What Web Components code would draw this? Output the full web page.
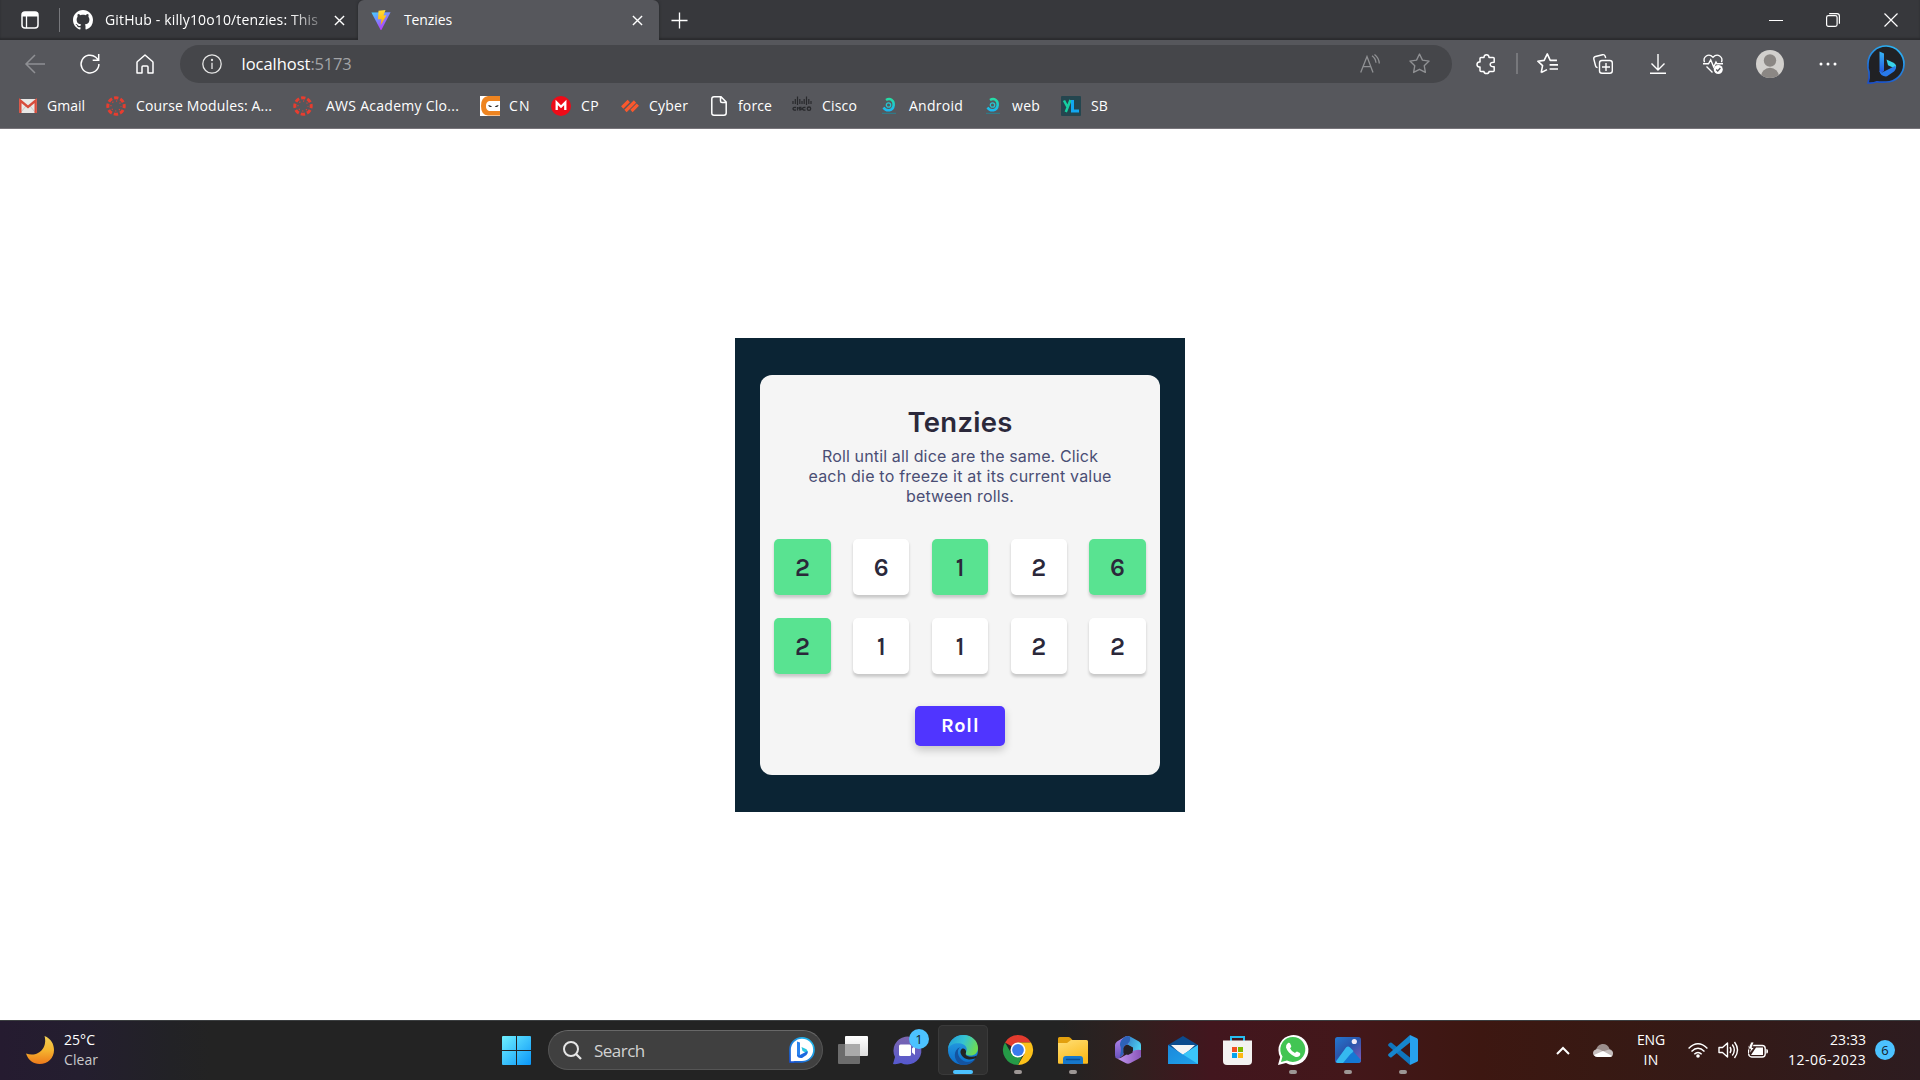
<!DOCTYPE html>
<html lang="en">
<head>
<meta charset="utf-8">
<title>Tenzies</title>
<style>
html,body{margin:0;height:100%;overflow:hidden;background:#fff}
body{font-family:"Open Sans","Noto Sans",sans-serif;font-size:14px}
</style>
</head>
<body>
<desktop-screen></desktop-screen>

<template id="icons">
<svg data-n="tabs" viewBox="0 0 18 18"><rect x="1" y="1" width="16" height="16" rx="3" fill="none" stroke="#fff" stroke-width="1.5"/><path d="M1 4a3 3 0 0 1 3-3h10a3 3 0 0 1 3 3v1.500H1z" fill="#fff"/><path d="M5.500 5v12" stroke="#fff" stroke-width="1.300"/></svg>
<svg data-n="github" viewBox="0 0 16 16"><path fill="#fff" d="M8 0C3.58 0 0 3.58 0 8c0 3.54 2.290 6.530 5.470 7.590.4.070.55-.17.55-.38 0-.19-.010-.82-.010-1.490-2.010.37-2.530-.49-2.690-.94-.090-.23-.48-.94-.82-1.130-.28-.15-.68-.52-.010-.53.63-.010 1.080.58 1.230.82.72 1.210 1.870.87 2.330.66.070-.52.28-.87.51-1.070-1.780-.2-3.640-.89-3.640-3.950 0-.87.31-1.590.82-2.150-.080-.2-.36-1.020.080-2.120 0 0 .67-.21 2.200.82.64-.18 1.320-.27 2-.27s1.360.090 2 .27c1.530-1.040 2.200-.82 2.200-.82.44 1.100.16 1.920.080 2.120.51.56.82 1.270.82 2.150 0 3.070-1.870 3.750-3.650 3.950.29.25.54.73.54 1.480 0 1.070-.010 1.930-.010 2.200 0 .21.15.46.55.38A8.010 8.010 0 0 0 16 8c0-4.420-3.580-8-8-8z"/></svg>
<svg data-n="vite" viewBox="0 0 20 20"><defs><linearGradient id="v1" x1="0" y1="0" x2=".6" y2="1"><stop stop-color="#41d1ff"/><stop offset="1" stop-color="#bd34fe"/></linearGradient><linearGradient id="v2" x1="0" y1="0" x2="0" y2="1"><stop stop-color="#ffdd35"/><stop offset="1" stop-color="#ffa800"/></linearGradient></defs><path d="M.4 2.600 19.600 2.300 10.500 19.700q-.5.500-1 0z" fill="url(#v1)"/><path d="M7.500.8 14.500 0 12.500 5.500l3-.3-5.800 10 .8-6H7z" fill="url(#v2)"/></svg>
<svg data-n="x" viewBox="0 0 12 12"><path d="m1 1 10 10M11 1 1 11" stroke="#fff" stroke-width="1.500"/></svg>
<svg data-n="plus" viewBox="0 0 18 18"><path d="M9 .5v17M.5 9h17" stroke="#fff" stroke-width="1.400"/></svg>
<svg data-n="min" viewBox="0 0 14 14"><path d="M0 7.500h14" stroke="#fff"/></svg>
<svg data-n="restore" viewBox="0 0 14 14" fill="none" stroke="#fff" stroke-width="1.200"><rect x=".6" y="2.600" width="10.500" height="10.800" rx="1.800"/><path d="M3.200.6H11Q13.400.8 13.400 3v7.800"/></svg>
<svg data-n="wclose" viewBox="0 0 14 14"><path d="m.5.5 13 13M13.500.5l-13 13" stroke="#fff" stroke-width="1.200"/></svg>
<svg data-n="back" viewBox="0 0 20 20" fill="none" stroke="#8f9094" stroke-width="1.500"><path d="M20 10H1M10 1 1 10l9 9"/></svg>
<svg data-n="reload" viewBox="0 0 20 20" fill="none" stroke="#fff" stroke-width="1.500"><path d="M18.900 10A8.900 8.900 0 1 1 15.800 3.300L18.500 6M18.700 0v6.300h-6"/></svg>
<svg data-n="home" viewBox="0 0 18 20" fill="none" stroke="#fff" stroke-width="1.500" stroke-linejoin="round"><path d="M1 8.500Q1 8 1.500 7.500L9 1l7.500 6.500Q17 8 17 8.500V19h-5v-6q0-1-1-1H7q-1 0-1 1v6H1z"/></svg>
<svg data-n="info" viewBox="0 0 20 20" fill="none" stroke="#e6e6e6" stroke-width="1.300"><circle cx="10" cy="10" r="9.200"/><path d="M10 8.700v6.300"/><circle cx="10" cy="6" r=".5" fill="#fff"/></svg>
<svg data-n="aloud" viewBox="0 0 20 20" fill="none" stroke="#909194" stroke-width="1.300"><path d="M.7 18.500 7 2.500l6 16M3 12.700h8M12 1.800q3.500 2.300 4 7M14.500.5q4.500 3.500 4.800 9"/></svg>
<svg data-n="star" viewBox="0 0 20 20" fill="none" stroke="#909194" stroke-width="1.300" stroke-linejoin="round"><path d="m10 1 2.800 5.800 6.300.9-4.600 4.400 1.100 6.400-5.600-3-5.600 3 1.100-6.400L.9 7.700l6.300-.9z"/></svg>
<svg data-n="puzzle" viewBox="0 0 20 20" fill="none" stroke="#fff" stroke-width="1.500" stroke-linejoin="round"><path d="M5 3.500h3V3q.2-2.300 2.500-2.300T13 3v.5h4.200q1 0 1 1v3.800c-2 0-4 .2-4 2.200s2 2.400 4 2.200v3.800q0 1-1 1H13v.4q-.2 1.700-2.500 1.700T8 17.900v-.4H5q-1 0-1-1V13h-.7Q1 12.700 1 10.500T3.300 8H4V4.500q0-1 1-1z"/></svg>
<svg data-n="favs" viewBox="0 0 20 20" fill="none" stroke="#fff" stroke-width="1.500" stroke-linejoin="round"><path d="M4 18.700 5.300 12 .8 7.800l6-.8L9.800.9 12.600 7h6.400M9.500 15.800 4 18.700M12 11.300h8M12 15.300h8"/></svg>
<svg data-n="collect" viewBox="0 0 20 20" fill="none" stroke="#fff" stroke-width="1.400"><rect x="6.500" y="6.500" width="12.800" height="12.800" rx="2.500"/><path d="M13 9v8M9 13h8M4.600 13.600Q3 13.500 2.600 12L.8 5Q.5 3 2.500 2.500l7-1.800q2-.4 2.700 1.600l.5 1.700"/></svg>
<svg data-n="down" viewBox="0 0 16 20" fill="none" stroke="#fff" stroke-width="1.400"><path d="M8 0v15.500M1.500 9.500 8 16l6.500-6.500M0 19.300h16"/></svg>
<svg data-n="heart" viewBox="0 0 20 20" fill="none" stroke="#fff" stroke-width="1.400"><path d="M1.500 8.300C-.5 3 5.500-1.500 10 3.300c4.500-4.800 10.500-.3 8.500 5M0 9.800h5.500l2.200-4 3 7.300 2.300-5 1 1.700H20M3.500 12.500l6 6"/><circle cx="15.300" cy="15.500" r="4.500" fill="#fff" stroke="none"/><path d="m13.200 15.500 1.500 1.500 2.700-3" stroke="#56575c"/></svg>
<svg data-n="avatar" viewBox="0 0 28 28"><defs><clipPath id="av"><circle cx="14" cy="14" r="14"/></clipPath></defs><g clip-path="url(#av)"><path fill="#d2d0cd" d="M0 0h28v28H0z"/><circle cx="14" cy="10.500" r="6.200" fill="#8b8784"/><circle cx="14" cy="27" r="9.200" fill="#8b8784"/></g></svg>
<svg data-n="dots" viewBox="0 0 18 18" fill="#fff"><circle cx="2" cy="9" r="1.500"/><circle cx="9" cy="9" r="1.500"/><circle cx="16" cy="9" r="1.500"/></svg>
<svg data-n="bing" viewBox="0 0 38 40"><defs><linearGradient id="b1" x1=".7" y1="0" x2=".3" y2="1"><stop stop-color="#2cb5f5"/><stop offset="1" stop-color="#1b50c8"/></linearGradient><linearGradient id="b2" x1="0" y1="0" x2="0" y2="1"><stop stop-color="#36b5f4"/><stop offset="1" stop-color="#2358e0"/></linearGradient></defs><path d="M1 39Q2.800 34 2 28A18.200 18.200 0 0 1 1 19.200 18 18 0 1 1 19 38Q14 38.500 10 37.800 6 39.500 1 39z" fill="#202124" stroke="url(#b1)" stroke-width="1.700"/><path d="m12.500 7.500 4.500 2v17.500l-3 2-1.500-1.500z" fill="url(#b2)"/><path d="m19.500 15.500 7 3.200q4 2.500 2 6l-7.500-3.500z" fill="#38d2e8"/><path d="m12.500 27 2.500 1.500 13.500-6.700q1 3.500-1.500 5.700l-7 4.800q-3 .5-5.500-1.300-2-2-2-4z" fill="#287aec"/></svg>
<svg data-n="gmail" viewBox="0 0 18 14"><rect width="18" height="14" rx="1" fill="#e8e8e6"/><path d="m2 13 5-6M16 13l-5-6" stroke="#c8c8c8"/><path d="M1.300 14V1.500L9 8l7.700-6.500V14" fill="none" stroke="#d74c3c" stroke-width="2.400"/></svg>
<svg data-n="canvas" viewBox="0 0 20 20"><g fill="none" stroke="#e73d2f"><circle cx="10" cy="10" r="8.200" stroke-width="3" stroke-dasharray="4.400 2.040" stroke-dashoffset="2.200"/><circle cx="10" cy="10" r="5" stroke-width="1.200" stroke-dasharray="1.200 2.727" stroke-dashoffset=".6"/></g></svg>
<svg data-n="cn" viewBox="0 0 20 20"><path fill="#fff" d="M0 0h20v20H0z"/><path d="M20 0H8Q1 1 1 10t7 9.500h12V15H9q-3-1-3-5t3-5h11z" fill="#ee8420"/><rect x="6.500" y="7" width="13.500" height="6.500" rx="2" fill="#fff"/><path d="M8 9.500q2-1 4 1.200-2 1-4-1.200zM18.800 9.500q-2-1-4 1.200 2 1 4-1.200z" fill="#222"/></svg>
<svg data-n="mega" viewBox="0 0 20 20"><circle cx="10" cy="10" r="10" fill="#ee0b18"/><path d="M5.700 14V6.500L10 10.700l4.300-4.200V14" fill="none" stroke="#fff" stroke-width="2.300"/></svg>
<svg data-n="cyber" viewBox="0 0 18 14"><g stroke="#fa582d" stroke-width="3.200"><path d="M1.200 8.500 7.800 2M4.500 12 14 2.500M10.500 12l6.300-6.300"/></g></svg>
<svg data-n="doc" viewBox="0 0 16 20" fill="none" stroke="#fff" stroke-width="1.500"><path d="M3 .8h7L15.200 6v11q0 2.200-2.200 2.200H3Q.8 19.200.8 17V3Q.8.8 3 .8zM9.500 1v4q0 1.500 1.500 1.500h4"/></svg>
<svg data-n="cisco" viewBox="0 0 20 20"><path d="M1 5v3M3.300 3v5M5.500 .5V9M7.800 3v5M10 5v3M12.200 3v5M14.500 .5V9M16.800 3v5M19 5v3" stroke="#28292c" stroke-width="1.200"/><g fill="none" stroke="#28292c" stroke-width="1.300"><path d="M4 11.500q-3-.5-3 1.200t3 1.300M5.500 11v3.500M9.500 11.500q-2.500-.5-2.500.5t2.300 1q0 1.300-2.300.8M13.500 11.500q-3-.5-3 1.200t3 1.300"/><circle cx="17" cy="12.700" r="1.700"/></g></svg>
<svg data-n="swirl" viewBox="0 0 14 16"><defs><linearGradient id="sw" x1="0" y1="0" x2="0" y2="1"><stop stop-color="#25dda5"/><stop offset="1" stop-color="#19b8f2"/></linearGradient></defs><path d="M4 2C8-.5 12 2 11.700 7 11 13 4.500 14 1.500 9.500" fill="none" stroke="url(#sw)" stroke-width="2.500"/><circle cx="6.500" cy="7" r="2.200" fill="none" stroke="#25c5d0" stroke-width="1.300"/><path d="M0 15.300h14" stroke="#2a8190"/></svg>
<svg data-n="yl" viewBox="0 0 20 20"><rect width="20" height="20" rx="1" fill="#24464f"/><path d="m3 4.500 3.200 6M9.500 4 4.800 16" stroke="#16cfa0" stroke-width="2.500"/><path d="M11.500 4v11H18" fill="none" stroke="#12a8f2" stroke-width="3"/></svg>
<svg data-n="moon" viewBox="0 0 28 28"><defs><linearGradient id="mo" x1="0" y1="0" x2="0" y2="1"><stop stop-color="#f1cf57"/><stop offset=".5" stop-color="#f5b52f"/><stop offset="1" stop-color="#ee7a1b"/></linearGradient></defs><path d="M18.500 0C25 2.500 28 8 28 14c0 8-6 14-14.500 14C7.500 28 2 24 0 17.500 12 22 22 12 18.500 0z" fill="url(#mo)"/></svg>
<svg data-n="start" viewBox="0 0 29 29"><defs><linearGradient id="wi" x1="0" y1="0" x2="1" y2="1"><stop stop-color="#6ff0ff"/><stop offset="1" stop-color="#0a96f8"/></linearGradient></defs><path d="M1 0h13v14H0V1Q0 0 1 0zM15 0h13q1 0 1 1v13H15zM0 15h14v14H1q-1 0-1-1zM15 15h14v13q0 1-1 1H15z" fill="url(#wi)"/></svg>
<svg data-n="search" viewBox="0 0 19 19"><circle cx="8" cy="8" r="7" fill="none" stroke="#e6e6e6" stroke-width="2"/><path d="m13 13 5 5" stroke="#e6e6e6" stroke-width="2.300"/></svg>
<svg data-n="bing2" viewBox="0 0 26 26"><defs><linearGradient id="b3" x1="1" y1="0" x2="0" y2="1"><stop stop-color="#1fc6f0"/><stop offset="1" stop-color="#184fd0"/></linearGradient></defs><path d="M1 25V13A12 12 0 1 1 13 24.800H6Q3 25.200 1 25z" fill="#fff" stroke="url(#b3)" stroke-width="1.700"/><path d="m8 4.500 3 1v13l-2 1-1-1z" fill="#2a83ee"/><path d="m12.500 10 5 2.300q2 2 1 4.200l-5-2.500z" fill="#2ac5de"/><path d="m8 17.500 2 1 8.500-4.500q.8 2.500-1 4l-4.500 3q-5 .5-5-3.500z" fill="#1b68df"/></svg>
<svg data-n="taskview" viewBox="0 0 30 28"><defs><linearGradient id="tv" x1="0" y1="0" x2="0" y2="1"><stop stop-color="#fff"/><stop offset="1" stop-color="#ddd"/></linearGradient></defs><rect y="8" width="22" height="20" rx="1" fill="#6c6c6c"/><rect x="7" width="23" height="20" rx="1" fill="url(#tv)"/><path d="M7 8h15v12H7z" fill="#aaa"/></svg>
<svg data-n="chat" viewBox="0 0 29 29"><defs><linearGradient id="ch" x1="0" y1="0" x2="0" y2="1"><stop stop-color="#7b65ae"/><stop offset="1" stop-color="#5559d0"/></linearGradient></defs><path d="M0 28 2 21A14 14 0 1 1 8 27Q4 28.500 0 28z" fill="url(#ch)"/><rect x="6" y="8.500" width="12" height="11.500" rx="1.500" fill="#fff"/><path d="m19 12.500 3-2.500v9l-3-2.500z" fill="#fff"/></svg>
<svg data-n="edge" viewBox="0 0 30 30"><defs><linearGradient id="e1" x1="0" y1=".2" x2="1" y2=".5"><stop stop-color="#229fd8"/><stop offset=".5" stop-color="#35c3d2"/><stop offset="1" stop-color="#6edc50"/></linearGradient><linearGradient id="e2" x1="0" y1="0" x2="0" y2="1"><stop stop-color="#2aa5e3"/><stop offset="1" stop-color="#0b6ccc"/></linearGradient></defs><circle cx="15" cy="15" r="15" fill="url(#e2)"/><path d="M0 14C1 5 8 0 15.500 0 24 0 30 6 30 13c0 5-3.500 7.500-7.500 7.500-4 0-5.500-1.700-4.500-3.300 1.800-3 .5-7.200-5-8.700C8 7.300 2 9 0 14z" fill="url(#e1)"/><path d="M12.500 12C9 14 9 20 13 24c4 4 9 4 14.500 0C24 29 19 30.500 14 30 8 28 5 21 8 15.500q1.700-3 4.500-3.500z" fill="#1453a0"/><path d="M13 15c-2 2.500 1.500 9 8 9.500 3 .2 5-1 6-1 .8.300 1.500-1 2-3-3 1.500-6 1.500-9 .7-4-1.500-1.500-3-2-5-.7-3-3.700-3.500-5-1.200z" fill="#232323"/></svg>
<svg data-n="chrome" viewBox="0 0 30 30"><path d="M15 15 2 7.500A15 15 0 0 1 28 7.500H15z" fill="#e33b2e"/><path d="M15 15V7.500h13A15 15 0 0 1 15 30l6.500-11.300z" fill="#fcc11a"/><path d="M15 30A15 15 0 0 1 2 7.500l6.500 11.200L15 22.500l4-1.200z" fill="#259a47"/><circle cx="15" cy="15" r="7.500" fill="#fff"/><circle cx="15" cy="15" r="5.900" fill="#3a7bec"/></svg>
<svg data-n="folder" viewBox="0 0 30 27"><defs><linearGradient id="fo" x1="0" y1="0" x2=".5" y2="1"><stop stop-color="#ffdf76"/><stop offset="1" stop-color="#fbbb1e"/></linearGradient></defs><path d="M0 1.500Q0 0 1.500 0h9q1 0 1.800.8L14.500 3H28v8H0z" fill="#e2a00e"/><path d="M0 6h9l4-3h15.500Q30 3 30 4.500V26q0 .8-1 .8H1q-1 0-1-1z" fill="url(#fo)"/><path d="M5 27v-5q0-3 3-3h14q3 0 3 3v5z" fill="#1778cb"/><path d="M8.500 22.500h13" stroke="#0a4e94" stroke-width="1.400" stroke-linecap="round"/></svg>
<svg data-n="m365" viewBox="0 0 26 28"><defs><linearGradient id="m1" x1="0" y1="0" x2="1" y2=".6"><stop stop-color="#2f6fc0"/><stop offset="1" stop-color="#50d8f5"/></linearGradient><linearGradient id="m2" x1="0" y1="0" x2="0" y2="1"><stop stop-color="#b78aef"/><stop offset="1" stop-color="#6a52bd"/></linearGradient><linearGradient id="m3" x1="0" y1="0" x2="1" y2="0"><stop stop-color="#c39af2"/><stop offset="1" stop-color="#8a55b8"/></linearGradient></defs><path d="M13 0q1.500 0 3 1l8 4.500q2 1.300 2 3.500v11q0 1-1 1.500L18 17v-5.500L9 7z" fill="url(#m1)"/><path d="M13 0Q11 0 9.500 1L2 5.500Q0 7 0 9v10.500Q0 22 2 22.500 4 23 6 21l2.500-2v-6.500q0-2 1.500-3L14 7V1z" fill="url(#m2)"/><path d="M9.500 1Q13-1 15 1.500 16 7 10 9.500q-1.500 1-1.500 3V18l-4 3.500Q7 14 5 9 5 4 9.500 1z" fill="#2d62b8"/><path d="M2 22.500q3 .5 6-2l9-5q4-2.500 9-1.500v5.500q0 2-2 3L15.500 27q-2.500 1.500-5 0z" fill="url(#m3)"/><path d="m13 9 4.500 2.700v5L13 19l-4.500-2.300v-5z" fill="#252025"/></svg>
<svg data-n="mail" viewBox="0 0 30 28"><defs><linearGradient id="ma" x1="0" y1="0" x2="1" y2="1"><stop stop-color="#1a88db"/><stop offset="1" stop-color="#20a2ea"/></linearGradient></defs><path d="M0 9 15 0l15 9v6H0z" fill="#0b4b8d"/><path d="M3 9h24L15 20z" fill="#f4f4f4"/><path d="m0 9 15 9.500L30 9v19H0z" fill="url(#ma)"/><path d="M30 9 15 18.500 30 28z" fill="#3bc5f8"/></svg>
<svg data-n="store" viewBox="0 0 29 29"><path d="M8 6V1h13v5" fill="none" stroke="#26bdf0" stroke-width="2"/><path d="M0 4.500h29V25q0 4-4 4H4q-4 0-4-4z" fill="#f3f2f1"/><path fill="#f05023" d="M9 11h5v5H9z"/><path fill="#7fb900" d="M15 11h5v5h-5z"/><path fill="#03a3ee" d="M9 17h5v5H9z"/><path fill="#fdb812" d="M15 17h5v5h-5z"/></svg>
<svg data-n="wa" viewBox="0 0 30 30"><path d="M0 30 2.200 22A15 15 0 1 1 8 28z" fill="#fff"/><path d="m3 27 1.500-5.500A12.500 12.500 0 1 1 9 25.500z" fill="#42c553"/><path d="M10 8q1-.8 2 .2l1.300 3q0 1-1.300 2 1.500 3.300 5 4.800 1-1.500 2-1.500l3 1.500q.8 1-.3 2.700-2 1.800-4.700 1C12 19.500 9 15.500 8 12.500q-.4-3 2-4.500z" fill="#fff"/></svg>
<svg data-n="photos" viewBox="0 0 26 26"><defs><linearGradient id="ph" x1="0" y1="0" x2=".8" y2="1"><stop stop-color="#2478d0"/><stop offset=".5" stop-color="#2a55ac"/><stop offset="1" stop-color="#7a5ab8"/></linearGradient></defs><rect width="26" height="26" rx="2.500" fill="url(#ph)"/><path d="M1 24 11 11q2-2.300 4 0l11 12q-.5 3-3 3H3q-2 0-2-2z" fill="#1478d4"/><path d="M1 24.500 11 10.500q2-2 4 0l3.500 3.500q-1 2-3 3L8 26H3q-1.500 0-2-1.500z" fill="#35b9f0"/><circle cx="19.300" cy="4.500" r="2.600" fill="#f3eaf5"/></svg>
<svg data-n="vscode" viewBox="0 0 30 30"><path d="M.5 9 2 7.800q.8-.6 1.600 0L22 22.500V30L.5 11q-1-1 0-2z" fill="#0f75bd"/><path d="M22 7.500 3.600 22.200q-.8.600-1.600 0L.5 21q-1-1 0-2L22 0z" fill="#1686ce"/><path d="m22 0 7 3.300q1 .5 1 1.500v20.500q0 1-1 1.500L22 30z" fill="#27a1ee"/></svg>
<svg data-n="chev" viewBox="0 0 14 9"><path d="m1 8 6-6 6 6" fill="none" stroke="#fff" stroke-width="2"/></svg>
<svg data-n="cloud" viewBox="0 0 20 13"><path d="M3 6C4 2 7 0 10 0c3 0 5.500 1.500 6.500 5Q20 6 20 9.500L15 13 3 8z" fill="#9b8e8c"/><path d="M4 5q3-.5 6 2.500l6-2q4 1 4 4 0 3.500-3.500 3.500h-12Q0 12.500 0 9q0-3 4-4z" fill="#c5bebd"/><path d="m1 11 9-4 9 5q-1 1-2.500 1h-12Q2 13 1 11z" fill="#fff"/></svg>
<svg data-n="wifi" viewBox="0 0 20 15" fill="none" stroke="#fff" stroke-width="1.400"><path d="M.6 5.500q9.400-9.300 18.800 0M3.500 8.500q6.500-6.400 13 0M6.300 11.200q3.700-3.600 7.400 0"/><circle cx="10" cy="13" r="1.800" fill="#fff" stroke="none"/></svg>
<svg data-n="sound" viewBox="0 0 20 18" fill="none" stroke="#fff" stroke-width="1.400" stroke-linejoin="round"><path d="M1 6.500h3.500l5-4.500v14l-5-4.500H1zM12 6q2 3 0 6M14.300 3.500q4 5.500 0 11M16.500 1q6 8 0 16"/></svg>
<svg data-n="battery" viewBox="0 0 20 17"><rect x=".7" y="3.500" width="16.500" height="11.500" rx="3" fill="none" stroke="#fff" stroke-width="1.400"/><path d="M18.300 7v4.500q1.700 0 1.700-1.500V8.500Q20 7 18.300 7z" fill="#fff"/><path d="M8 5.500h7V13H3z" fill="#fff"/><path d="M3 0 0 7h2.500L1 12l5.500-6.500H4L6 0z" fill="#fff" stroke="#351a18" stroke-width=".8"/></svg>
</template>

<script>
class UiIcon extends HTMLElement{
  connectedCallback(){
    if(this.shadowRoot)return;
    const r=this.attachShadow({mode:'open'});
    r.innerHTML='<style>:host{display:block;flex:none}svg{display:block;width:100%;height:100%;overflow:visible}</style>';
    r.append(document.getElementById('icons').content.querySelector(`[data-n="${this.getAttribute('name')}"]`).cloneNode(true));
    this.style.width=this.getAttribute('w')+'px';
    this.style.height=(this.getAttribute('h')||this.getAttribute('w'))+'px';
    if(this.hasAttribute('ml'))this.style.marginLeft=this.getAttribute('ml')+'px';
  }
}
/* A label that tracks its letters so the text takes up the given width. */
class FitText extends HTMLElement{
  connectedCallback(){
    if(this.shadowRoot)return;
    const r=this.attachShadow({mode:'open'});
    r.innerHTML='<style>:host{display:block;flex:none;white-space:nowrap}span{display:inline-block}</style><span><slot></slot></span>';
    const w=+this.getAttribute('w'),s=r.querySelector('span'),n=this.textContent.length;
    if(this.hasAttribute('ml'))this.style.marginLeft=this.getAttribute('ml')+'px';
    this.style.width=w+'px';
    s.style.letterSpacing=(w-s.getBoundingClientRect().width)/Math.max(1,n-.5)+'px';
  }
}
const define=(name,html)=>customElements.define(name,class extends HTMLElement{
  connectedCallback(){
    if(this.shadowRoot)return;
    this.attachShadow({mode:'open'}).innerHTML=html;
  }
});

define('browser-tabs',`<style>
:host{display:flex;height:40px;background:#37383c;box-shadow:inset 0 -2px 2px #2a2b2e;color:#fff;align-items:center}
.first{display:flex;align-items:center;width:358px;height:40px;box-sizing:border-box}
fit-text{padding-bottom:2px}
.line{width:1px;height:24px;background:#77787c;margin-left:20px}
.fade{-webkit-mask-image:linear-gradient(90deg,#000 185px,#0005 213px);mask-image:linear-gradient(90deg,#000 185px,#0005 213px)}
.on{display:flex;align-items:center;width:301px;height:40px;background:#56575c;border-radius:6px 6px 0 0;box-shadow:0 0 3px #242528;box-sizing:border-box}
.win{display:flex;margin-left:auto;align-items:center;margin-right:22px;padding-bottom:1px}
</style>
<div class="first"><ui-icon name="tabs" w="18" ml="21"></ui-icon><div class="line"></div><ui-icon name="github" w="20" ml="13"></ui-icon><fit-text class="fade" w="213" ml="12">GitHub - killy10o10/tenzies: This</fit-text><ui-icon name="x" w="11" ml="16"></ui-icon></div>
<div class="on"><ui-icon name="vite" w="20" ml="13"></ui-icon><fit-text w="48" ml="13">Tenzies</fit-text><ui-icon name="x" w="11" ml="180"></ui-icon></div>
<ui-icon name="plus" w="17" ml="12"></ui-icon>
<div class="win"><ui-icon name="min" w="14"></ui-icon><ui-icon name="restore" w="14" ml="43"></ui-icon><ui-icon name="wclose" w="14" ml="44"></ui-icon></div>`);

define('browser-toolbar',`<style>
:host{display:flex;height:47px;align-items:center;background:#56575c}
.addr{display:flex;align-items:center;width:1272px;height:38px;border-radius:19px;background:#45464a;margin-left:26px;font-size:16.500px;color:#fff}
fit-text{padding-bottom:1px}
.port{color:#a2a3a6}
.line{width:2px;height:21px;background:#77787c;margin-left:20px}
</style>
<ui-icon name="back" w="20" ml="25"></ui-icon><ui-icon name="reload" w="20" ml="35"></ui-icon><ui-icon name="home" w="18" h="20" ml="36"></ui-icon>
<div class="addr"><ui-icon name="info" w="20" ml="22"></ui-icon><fit-text w="69" ml="19.500">localhost</fit-text><fit-text class="port" w="41">:5173</fit-text><ui-icon name="aloud" w="20" ml="1008.500"></ui-icon><ui-icon name="star" w="21" ml="29"></ui-icon></div>
<ui-icon name="puzzle" w="20" ml="24"></ui-icon><div class="line"></div><ui-icon name="favs" w="21" ml="19"></ui-icon><ui-icon name="collect" w="20" ml="35"></ui-icon><ui-icon name="down" w="16" h="20" ml="37"></ui-icon><ui-icon name="heart" w="20" ml="37"></ui-icon><ui-icon name="avatar" w="28" ml="33"></ui-icon><ui-icon name="dots" w="18" ml="35"></ui-icon><ui-icon name="bing" w="38" h="40" ml="30"></ui-icon>`);

define('bookmark-bar',`<style>:host{display:flex;height:42px;align-items:center;box-sizing:border-box;background:#56575c;border-bottom:1px solid #77747a;color:#fff;padding-bottom:3px}
fit-text{padding-bottom:2px}</style>
<ui-icon name="gmail" w="18" h="14" ml="19"></ui-icon><fit-text w="38" ml="10">Gmail</fit-text>
<ui-icon name="canvas" w="20" ml="21"></ui-icon><fit-text w="136" ml="10">Course Modules: A...</fit-text>
<ui-icon name="canvas" w="20" ml="21"></ui-icon><fit-text w="133" ml="13">AWS Academy Clo...</fit-text>
<ui-icon name="cn" w="20" ml="21"></ui-icon><fit-text w="21" ml="9">CN</fit-text>
<ui-icon name="mega" w="20" ml="21"></ui-icon><fit-text w="18" ml="10">CP</fit-text>
<ui-icon name="cyber" w="18" h="14" ml="22"></ui-icon><fit-text w="39" ml="10">Cyber</fit-text>
<ui-icon name="doc" w="16" h="20" ml="23"></ui-icon><fit-text w="34" ml="11">force</fit-text>
<ui-icon name="cisco" w="20" ml="20"></ui-icon><fit-text w="35" ml="10">Cisco</fit-text>
<ui-icon name="swirl" w="14" h="16" ml="25"></ui-icon><fit-text w="54" ml="13">Android</fit-text>
<ui-icon name="swirl" w="14" h="16" ml="23"></ui-icon><fit-text w="28" ml="12">web</fit-text>
<ui-icon name="yl" w="20" ml="21"></ui-icon><fit-text w="17" ml="10">SB</fit-text>`);

define('game-die',`<style>
:host{display:flex;align-items:center;justify-content:center;width:56.250px;height:56.250px;box-sizing:border-box;padding-top:1px;border-radius:5px;background:#fff;box-shadow:0 2.500px 3px rgba(0,0,0,.18);font:650 25px Karla,Inter,sans-serif;color:#2b283a}
:host([held]){background:#59e391}
</style><slot></slot>`);

define('tenzies-game',`<style>
:host{display:block;width:450px;height:474px;box-sizing:border-box;padding:37px 25px;background:#0b2434;font-family:Inter,sans-serif}
.card{height:400px;box-sizing:border-box;background:#f5f5f5;border-radius:12px;display:flex;flex-direction:column;align-items:center;padding-top:29px}
h1{margin:0;font-size:27.500px;line-height:37px;font-weight:600;color:#2b283a}
.txt{margin-top:5px;font-size:16px;font-weight:385;line-height:20px;color:#4a4e74;display:flex;flex-direction:column;align-items:center}
.dice{display:grid;grid-template-columns:repeat(5,56.250px);gap:22.500px;margin-top:33px}
button{margin-top:32px;width:90px;height:40px;border:0;border-radius:5px;background:#5035ff;color:#fff;font:700 20px Karla,Inter,sans-serif;padding:0 0 2px;display:flex;align-items:center;justify-content:center;box-shadow:0 4px 8px rgba(0,0,0,.2)}
</style>
<div class="card"><h1><fit-text w="105">Tenzies</fit-text></h1>
<div class="txt"><fit-text w="276">Roll until all dice are the same. Click</fit-text><fit-text w="303">each die to freeze it at its current value</fit-text><fit-text w="108">between rolls.</fit-text></div>
<div class="dice"><game-die held>2</game-die><game-die>6</game-die><game-die held>1</game-die><game-die>2</game-die><game-die held>6</game-die><game-die held>2</game-die><game-die>1</game-die><game-die>1</game-die><game-die>2</game-die><game-die>2</game-die></div>
<button><fit-text w="38">Roll</fit-text></button></div>`);

define('task-app',`<style>
:host{display:flex;flex:none;position:relative;width:50px;height:50px;margin-right:5px;align-items:center;justify-content:center;border-radius:5px}
:host([active]){background:#2f2f2f;box-shadow:inset 0 0 0 1px #3a3a3a}
:host([open])::after,:host([active])::after{content:"";position:absolute;bottom:1px;width:8px;height:4px;border-radius:2px;background:#9d9795}
:host([active])::after{width:20px;background:#4cc2ff}
</style><slot></slot>`);

define('task-bar',`<style>
:host{display:flex;height:60px;box-sizing:border-box;border-top:1px solid #3b3e40;padding-bottom:1px;align-items:center;color:#fff;background:linear-gradient(90deg,#251b30 0,#241e2f 80px,#222226 170px,#232323 210px,#232323 1060px,#30201f 1130px,#42161e 1210px,#43171a 1350px,#3d1711 1480px,#381913 1600px,#331a18 1750px,#2d1c20 1920px)}
.two{line-height:20px;padding-bottom:1px;margin-left:10px;margin-right:1px}
.two fit-text+fit-text{color:#c9c9cb}
.search{display:flex;align-items:center;width:275px;height:40px;border-radius:20px;box-sizing:border-box;background:#404040;border:1px solid #555;border-top-color:#686868;margin-left:17px;font-size:17px;color:#d2d2d2}
.chat{position:relative;margin-left:25px}
.badge{display:flex;align-items:center;justify-content:center;width:20px;height:20px;border-radius:50%;background:#4cc2ff;color:#14202a;font-size:13px}
.chat .badge{position:absolute;left:16px;top:-7px}
.apps{display:flex;margin-left:16px}
.lang,.time{display:flex;flex-direction:column;line-height:20px}
.lang{align-items:center;margin-left:24px}
.time{align-items:flex-end;margin-left:20px;width:78px;padding-bottom:1px}
.end{margin-left:9px}
</style>
<ui-icon name="moon" w="28" ml="26"></ui-icon><div class="two"><fit-text w="31">25°C</fit-text><fit-text w="34">Clear</fit-text></div>
<ui-icon name="start" w="29" ml="403"></ui-icon>
<div class="search"><ui-icon name="search" w="19" ml="14"></ui-icon><fit-text w="51" ml="12">Search</fit-text><ui-icon name="bing2" w="26" ml="144"></ui-icon></div>
<ui-icon name="taskview" w="30" h="28" ml="15"></ui-icon>
<div class="chat"><ui-icon name="chat" w="29"></ui-icon><div class="badge">1</div></div>
<div class="apps"><task-app active><ui-icon name="edge" w="30"></ui-icon></task-app><task-app open><ui-icon name="chrome" w="30"></ui-icon></task-app><task-app open><ui-icon name="folder" w="30" h="27"></ui-icon></task-app><task-app><ui-icon name="m365" w="26" h="28"></ui-icon></task-app><task-app><ui-icon name="mail" w="30" h="28"></ui-icon></task-app><task-app><ui-icon name="store" w="29" style="margin-right:1px"></ui-icon></task-app><task-app open><ui-icon name="wa" w="30"></ui-icon></task-app><task-app open><ui-icon name="photos" w="26"></ui-icon></task-app><task-app open><ui-icon name="vscode" w="30"></ui-icon></task-app></div>
<ui-icon name="chev" w="14" h="9" ml="123"></ui-icon><ui-icon name="cloud" w="20" h="13" ml="23"></ui-icon>
<div class="lang"><fit-text w="28">ENG</fit-text><fit-text w="15">IN</fit-text></div>
<ui-icon name="wifi" w="20" h="15" ml="23"></ui-icon><ui-icon name="sound" w="20" h="18" ml="10"></ui-icon><ui-icon name="battery" w="20" h="17" ml="10"></ui-icon>
<div class="time"><fit-text w="36">23:33</fit-text><fit-text w="78">12-06-2023</fit-text></div>
<div class="badge end">6</div>`);

define('desktop-screen',`<style>
:host{display:flex;flex-direction:column;width:1920px;height:1080px}
main{flex:1;display:flex;justify-content:center;align-items:center;background:#fff;padding-top:1px}
</style><browser-tabs></browser-tabs><browser-toolbar></browser-toolbar><bookmark-bar></bookmark-bar><main><tenzies-game></tenzies-game></main><task-bar></task-bar>`);
customElements.define('ui-icon',UiIcon);
customElements.define('fit-text',FitText);
</script>
</body>
</html>
